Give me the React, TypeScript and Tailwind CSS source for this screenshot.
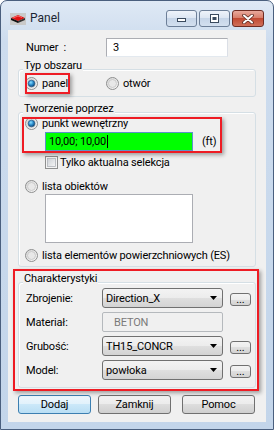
import React from "react";

function PanelIcon() {
  return (
    <svg width="16" height="12" viewBox="0 0 16 12">
      <rect x="0" y="0" width="16" height="12" fill="#c9c9c9" />
      <polygon points="1,5 8,2 15,5 8,8" fill="#e01010" />
      <polygon points="1,5 8,8 8,10 1,7" fill="#111" />
      <polygon points="8,8 15,5 15,7 8,10" fill="#333" />
      <polyline points="3,5 8,3 12,4.5" fill="none" stroke="#ff8080" strokeWidth="0.8" />
    </svg>
  );
}

function Radio({ on }: { on?: boolean }) {
  return (
    <svg width="13" height="13" viewBox="0 0 13 13" className="shrink-0">
      <defs>
        <linearGradient id="rOuter" x1="0" y1="0" x2="1" y2="1">
          <stop offset="0" stopColor="#d4d4d4" />
          <stop offset="1" stopColor="#fafafa" />
        </linearGradient>
        <radialGradient id="rDot" cx="0.4" cy="0.35" r="0.7">
          <stop offset="0" stopColor="#8fe0ff" />
          <stop offset="0.5" stopColor="#2d8fcf" />
          <stop offset="1" stopColor="#0c3f6c" />
        </radialGradient>
      </defs>
      <circle cx="6.5" cy="6.5" r="6" fill="url(#rOuter)" stroke="#8e8f8f" />
      <circle cx="6.5" cy="6.5" r="4" fill="#e8e8e8" stroke="#c4c4c4" strokeWidth="0.8" />
      {on && <circle cx="6.5" cy="6.5" r="3.3" fill="url(#rDot)" stroke="#1b4f7c" strokeWidth="0.6" />}
    </svg>
  );
}

function Check() {
  return (
    <svg width="13" height="13" viewBox="0 0 13 13" className="shrink-0">
      <defs>
        <linearGradient id="cIn" x1="0" y1="0" x2="1" y2="1">
          <stop offset="0" stopColor="#cbcfd5" />
          <stop offset="1" stopColor="#f6f6f6" />
        </linearGradient>
      </defs>
      <rect x="0.5" y="0.5" width="12" height="12" fill="#f4f4f4" stroke="#8e8f8f" />
      <rect x="2.5" y="2.5" width="8" height="8" fill="url(#cIn)" stroke="#b0b4ba" strokeWidth="0.8" />
    </svg>
  );
}

function Combo({ value }: { value: string }) {
  return (
    <div className="flex h-[20px] w-[121px] items-center rounded-[3px] border border-[#707070] bg-[linear-gradient(#f3f3f3,#ececec_50%,#dfdfdf_50%,#d3d3d3)] pl-[3px] pr-[5px]">
      <span className="flex-1 leading-[15px]">{value}</span>
      <svg width="7" height="4" viewBox="0 0 7 4">
        <path d="M0 0h7L3.5 4z" fill="#000" />
      </svg>
    </div>
  );
}

function Dots() {
  return (
    <div className="ml-[7px] mt-[3px] flex h-[13px] w-[21px] items-end justify-center rounded-[3px] border border-[#707070] bg-[linear-gradient(#f3f3f3,#ececec_50%,#dfdfdf_50%,#d3d3d3)] pb-[1px] text-[11px] leading-[8px]">
      ...
    </div>
  );
}

function Group({ title, className, children }: { title: string; className?: string; children: React.ReactNode }) {
  return (
    <div className={"rounded-[3px] border border-[#d5dfe5] shadow-[inset_1px_1px_0_#fff] " + (className ?? "")}>
      <div className="-mt-[12px] ml-[4px] w-fit bg-[#f0f0f0] px-[1px] leading-[15px]">{title}</div>
      {children}
    </div>
  );
}

function RadioRow({ on, label, className }: { on?: boolean; label: string; className?: string }) {
  return (
    <div className={"flex h-[15px] items-center gap-[4px] " + (className ?? "")}>
      <Radio on={on} />
      <span className="leading-[15px] whitespace-nowrap">{label}</span>
    </div>
  );
}

function Button({ label, primary }: { label: string; primary?: boolean }) {
  return (
    <div
      className={
        "flex h-[19px] w-[73px] items-center justify-center rounded-[3px] border leading-[15px] " +
        (primary
          ? "border-[#3c7fb1] bg-[linear-gradient(#eef7fd,#e0f1fb_50%,#cbe8f9_50%,#b9def4)]"
          : "border-[#707070] bg-[linear-gradient(#f2f2f2,#ebebeb_50%,#dddddd_50%,#cfcfcf)]")
      }
    >
      {label}
    </div>
  );
}

const captionBtn = "flex h-[17px] items-center justify-center rounded-[3px] border";

export default function App() {
  return (
    <div className="relative h-[430px] w-[274px] overflow-hidden rounded-t-[7px] border border-[#4a5f7e] bg-[linear-gradient(#dfe9f5,#cddcee_40px,#c3d5ea)] font-['Roboto',sans-serif] text-[11px] tracking-[-0.15px] text-black">
      {/* title bar */}
      <div className="flex h-[29px] items-start">
        <div className="ml-[9px] mt-[12px]">
          <PanelIcon />
        </div>
        <span className="ml-[4px] mt-[9px] text-[12px] leading-[16px] tracking-normal text-[#1b2633]">Panel</span>
        <div className="ml-auto mr-[9px] mt-[9px] flex gap-[2px]">
          <div className={captionBtn + " w-[31px] border-[#6d7f98] bg-[linear-gradient(#eef3fa,#dbe5f2_50%,#c6d5e8_50%,#d3e0ef)]"}>
            <svg width="11" height="8" viewBox="0 0 11 8">
              <rect x="1.5" y="3.5" width="8" height="3" fill="#fff" stroke="#3a4a5e" />
            </svg>
          </div>
          <div className={captionBtn + " w-[31px] border-[#6d7f98] bg-[linear-gradient(#eef3fa,#dbe5f2_50%,#c6d5e8_50%,#d3e0ef)]"}>
            <svg width="11" height="9" viewBox="0 0 11 9">
              <rect x="1.5" y="0.5" width="8" height="8" fill="#fff" stroke="#3a4a5e" />
              <rect x="3.5" y="3" width="4" height="3" fill="#3a4a5e" />
            </svg>
          </div>
          <div className={captionBtn + " w-[32px] border-[#6e2b22] bg-[linear-gradient(#e9a99c,#d77a66_50%,#c24a33_50%,#d0705a)]"}>
            <svg width="12" height="10" viewBox="0 0 12 10">
              <path d="M2 1.5 10 8.5M10 1.5 2 8.5" stroke="#5a2a22" strokeWidth="3.6" strokeLinecap="round" />
              <path d="M2 1.5 10 8.5M10 1.5 2 8.5" stroke="#fff" strokeWidth="2" strokeLinecap="round" />
            </svg>
          </div>
        </div>
      </div>

      {/* client area */}
      <div className="mx-[7px] h-[392px] bg-[#f0f0f0] px-[10px] pt-[8px]">
        <div className="flex h-[19px] items-center">
          <span className="ml-[8px] w-[80px] whitespace-pre leading-[15px]">Numer  :</span>
          <div className="flex h-[19px] w-[122px] items-center border border-[#abadb3] border-b-[#e3e9ef] border-r-[#dbdfe6] bg-white pl-[6px] leading-[15px]">
            3
          </div>
        </div>

        <Group title="Typ obszaru" className="mt-[12px] pb-[5px]">
          <div className="mt-[3px] flex pl-[6px]">
            <RadioRow on label="panel" className="w-[81px]" />
            <RadioRow label="otwór" className="gap-[3px]" />
          </div>
        </Group>

        <Group title="Tworzenie poprzez" className="mt-[15px] pb-[3px]">
          <RadioRow on label="punkt wewnętrzny" className="pl-[6px]" />
          <div className="mt-[1px] flex h-[19px] items-center pl-[26px]">
            <div className="flex h-[19px] w-[148px] items-center border border-[#5c93c9] bg-[#00ff00] pl-[3px] leading-[15px]">
              10,00; 10,00
              <span className="ml-[1px] h-[13px] w-px bg-black" />
            </div>
            <span className="ml-[9px] leading-[15px]">(ft)</span>
          </div>
          <div className="mt-[4px] flex h-[15px] items-center gap-[2px] pl-[26px]">
            <Check />
            <span className="leading-[15px]">Tylko aktualna selekcja</span>
          </div>
          <RadioRow label="lista obiektów" className="mt-[9px] pl-[6px]" />
          <div className="ml-[26px] h-[49px] w-[148px] border border-[#abadb3] bg-white" />
          <RadioRow label="lista elementów powierzchniowych (ES)" className="mt-[5px] pl-[6px]" />
        </Group>

        <Group title="Charakterystyki" className="mt-[15px] pb-[7px]">
          <div className="mt-[2px] flex flex-col gap-[4px] pl-[7px]">
            <div className="flex h-[20px] items-center">
              <span className="w-[76px] leading-[15px]">Zbrojenie:</span>
              <Combo value="Direction_X" />
              <Dots />
            </div>
            <div className="flex h-[20px] items-center">
              <span className="w-[76px] leading-[15px]">Materiał:</span>
              <div className="flex h-[20px] w-[121px] items-center rounded-[2px] border border-[#b5b9bd] bg-[#f0f0f0] pl-[11px] leading-[15px] text-[#7a7a7a]">
                BETON
              </div>
            </div>
            <div className="flex h-[20px] items-center">
              <span className="w-[76px] leading-[15px]">Grubość:</span>
              <Combo value="TH15_CONCR" />
              <Dots />
            </div>
            <div className="flex h-[20px] items-center">
              <span className="w-[76px] leading-[15px]">Model:</span>
              <Combo value="powłoka" />
              <Dots />
            </div>
          </div>
        </Group>

        <div className="mt-[7px] flex">
          <Button label="Dodaj" primary />
          <div className="ml-[7px]">
            <Button label="Zamknij" />
          </div>
          <div className="ml-[11px]">
            <Button label="Pomoc" />
          </div>
        </div>
      </div>

      {/* red annotation frames */}
      <div className="absolute left-[24px] top-[72px] h-[21px] w-[45px] border-2 border-[#ee1c24] shadow-[2px_2px_4px_rgba(0,0,0,0.35)]" />
      <div className="absolute left-[21px] top-[116px] h-[36px] w-[200px] border-2 border-[#ee1c24] shadow-[2px_2px_4px_rgba(0,0,0,0.35)]" />
      <div className="absolute left-[12px] top-[268px] h-[122px] w-[246px] border-2 border-[#ee1c24] shadow-[2px_2px_4px_rgba(0,0,0,0.35)]" />
    </div>
  );
}
